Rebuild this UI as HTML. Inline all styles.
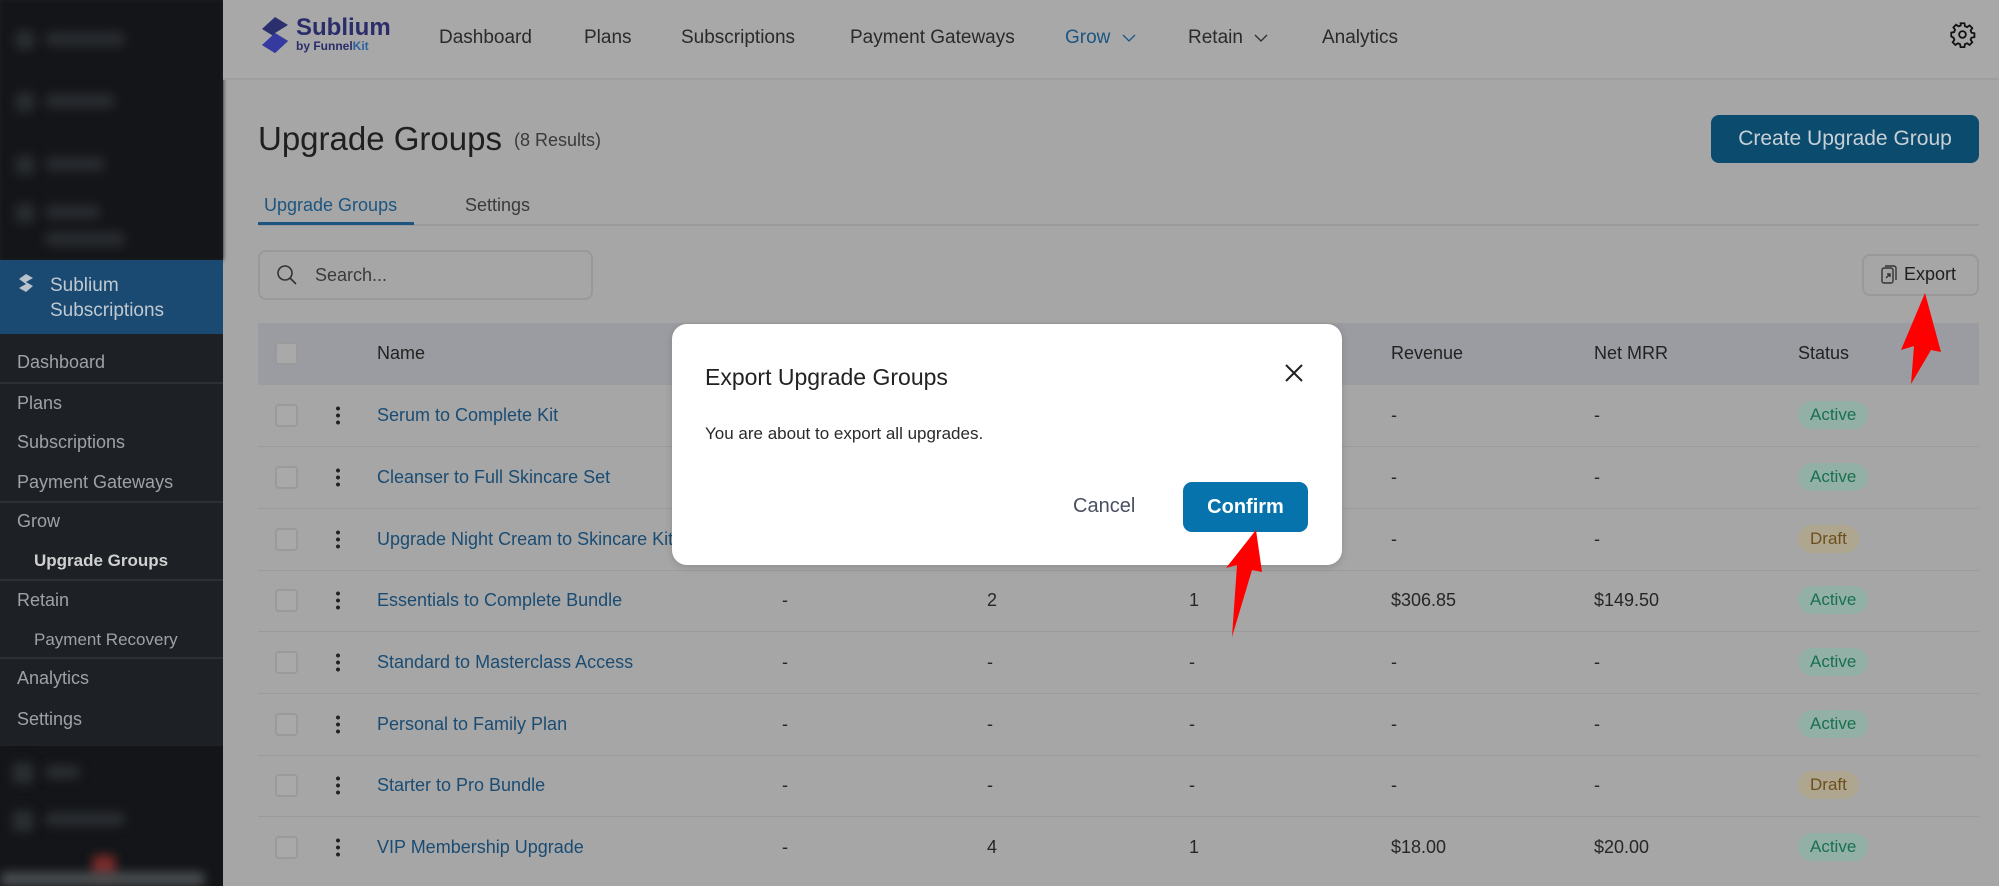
<!DOCTYPE html>
<html><head><meta charset="utf-8"><style>
*{margin:0;padding:0;box-sizing:border-box}
body{width:1999px;height:886px;overflow:hidden;background:#a6a6a6;font-family:"Liberation Sans",sans-serif;position:relative;color:#222}
.a{position:absolute;white-space:nowrap}
#sb{position:absolute;left:0;top:0;width:223px;height:886px;background:#1d2125}
#sbtop{position:absolute;left:0;top:0;width:223px;height:260px;background:#131518;filter:blur(2px)}
.bl{position:absolute;height:14px;background:#2a2d31;border-radius:6px;filter:blur(5px)}
.si{position:absolute;left:17px;font-size:18px;color:#9ea2a6}
.sep{position:absolute;left:0;width:223px;height:2px;background:#2c3034}
#hdr{position:absolute;left:223px;top:0;width:1776px;height:80px;background:#a8a8a8;border-bottom:2px solid #9e9e9e}
.nv{position:absolute;top:27px;font-size:19px;color:#2a2a2a}
.row{position:absolute;left:258px;width:1721px;height:62px;border-bottom:1px solid #9b9b9b}
.cb{position:absolute;left:17px;top:19px;width:23px;height:23px;border:2px solid #9a9a9a;border-radius:4px;background:#a9a9a9}
.kb{position:absolute;left:78px;top:20px;width:4px;height:20px;background:radial-gradient(circle,#222 1.8px,transparent 2.2px) 0 0/4px 7px repeat-y}
.nm{position:absolute;left:119px;top:20px;font-size:18px;color:#1a4c73}
.c{position:absolute;top:20px;font-size:18px;color:#262626}
.bd{position:absolute;left:1540px;top:16px;height:28px;padding:0 12px;border-radius:14px;font-size:17px;line-height:28px}
.ac{background:#93b0a7;color:#18704f}
.dr{background:#aea68f;color:#6e4f1c}
</style></head><body>
<div id="sb">
<div id="sbtop">
<div class="bl" style="left:15px;top:30px;width:20px;height:20px"></div><div class="bl" style="left:45px;top:32px;width:80px"></div>
<div class="bl" style="left:15px;top:92px;width:20px;height:20px"></div><div class="bl" style="left:45px;top:94px;width:70px"></div>
<div class="bl" style="left:15px;top:155px;width:20px;height:20px"></div><div class="bl" style="left:45px;top:157px;width:60px"></div>
<div class="bl" style="left:15px;top:203px;width:20px;height:20px"></div><div class="bl" style="left:45px;top:205px;width:55px"></div><div class="bl" style="left:45px;top:232px;width:80px"></div>
</div>
<div style="position:absolute;left:0;top:260px;width:223px;height:74px;background:#1a4a72"></div>
<svg class="a" style="left:15px;top:272px" width="22" height="22" viewBox="0 0 22 22"><path d="M4 7 L11 2 L18 6 L11 10 L18 14 L11 20 L4 16 L11 12 Z" fill="#b8c2cc"/></svg>
<div class="a" style="left:50px;top:273px;font-size:19px;color:#c0c8d0;line-height:25px">Sublium<br>Subscriptions</div>
<div class="si" style="top:352px">Dashboard</div>
<div class="sep" style="top:382px"></div>
<div class="si" style="top:393px">Plans</div>
<div class="si" style="top:432px">Subscriptions</div>
<div class="si" style="top:472px">Payment Gateways</div>
<div class="sep" style="top:501px"></div>
<div class="si" style="top:511px">Grow</div>
<div class="si" style="top:551px;left:34px;font-size:17px;font-weight:bold;color:#d0d0d0">Upgrade Groups</div>
<div class="sep" style="top:579px"></div>
<div class="si" style="top:590px">Retain</div>
<div class="si" style="top:630px;left:34px;font-size:17px">Payment Recovery</div>
<div class="sep" style="top:657px"></div>
<div class="si" style="top:668px">Analytics</div>
<div class="si" style="top:709px">Settings</div>
<div style="position:absolute;left:0;top:746px;width:223px;height:140px;background:#131518"></div>
<div class="bl" style="left:12px;top:762px;width:22px;height:22px"></div><div class="bl" style="left:45px;top:765px;width:35px"></div>
<div class="bl" style="left:12px;top:810px;width:22px;height:22px"></div><div class="bl" style="left:45px;top:812px;width:80px"></div>
<div class="bl" style="left:92px;top:855px;width:24px;height:24px;background:#7a2a2a"></div>
<div class="bl" style="left:0;top:872px;width:205px;height:14px;background:#4a4d50"></div>
</div>
<div id="hdr"></div>
<svg class="a" style="left:259px;top:16px" width="32" height="38" viewBox="0 0 32 38"><path d="M16 1 L29 9 L16 17 L29 25 L16 37 L3 29 L16 21 L3 13 Z" fill="#2b2f6e"/><path d="M16 17 L29 25 L16 37 L3 29 Z" fill="#343aa0"/></svg>
<div class="a" style="left:296px;top:14px;font-size:24px;font-weight:bold;color:#2a2d6a">Sublium</div>
<div class="a" style="left:296px;top:39px;font-size:12px;font-weight:bold;color:#2a2d6a">by Funnel<span style="color:#2d62a0">Kit</span></div>
<div class="nv" style="left:439px">Dashboard</div>
<div class="nv" style="left:584px">Plans</div>
<div class="nv" style="left:681px">Subscriptions</div>
<div class="nv" style="left:850px">Payment Gateways</div>
<div class="nv" style="left:1065px;color:#1c5580">Grow</div>
<svg class="a" style="left:1122px;top:34px" width="14" height="9" viewBox="0 0 14 9" fill="none" stroke="#1c5580" stroke-width="1.3"><path d="M1 1 L7 7 L13 1"/></svg>
<div class="nv" style="left:1188px">Retain</div>
<svg class="a" style="left:1254px;top:34px" width="14" height="9" viewBox="0 0 14 9" fill="none" stroke="#2a2a2a" stroke-width="1.3"><path d="M1 1 L7 7 L13 1"/></svg>
<div class="nv" style="left:1322px">Analytics</div>
<svg class="a" style="left:1949px;top:21px" width="27" height="27" viewBox="0 0 24 24" fill="none" stroke="#111" stroke-width="1.6"><circle cx="12" cy="12" r="3"/><path d="M10.3 2h3.4l.5 2.6 1.9.8 2.2-1.5 2.4 2.4-1.5 2.2.8 1.9 2.6.5v3.4l-2.6.5-.8 1.9 1.5 2.2-2.4 2.4-2.2-1.5-1.9.8-.5 2.6h-3.4l-.5-2.6-1.9-.8-2.2 1.5-2.4-2.4 1.5-2.2-.8-1.9L2 13.7v-3.4l2.6-.5.8-1.9-1.5-2.2 2.4-2.4 2.2 1.5 1.9-.8z"/></svg>

<div class="a" style="left:258px;top:120px;font-size:33px;color:#1f1f1f">Upgrade Groups</div>
<div class="a" style="left:514px;top:130px;font-size:18px;color:#3a3a3a">(8 Results)</div>
<div class="a" style="left:1711px;top:115px;width:268px;height:48px;background:#0a4b6e;border-radius:8px;color:#c8d0d6;font-size:21px;line-height:48px;text-align:center">Create Upgrade Group</div>
<div class="a" style="left:264px;top:195px;font-size:18px;color:#1c5580">Upgrade Groups</div>
<div class="a" style="left:465px;top:195px;font-size:18px;color:#3a3a3a">Settings</div>
<div class="a" style="left:258px;top:224px;width:1721px;height:2px;background:#9a9a9c"></div>
<div class="a" style="left:258px;top:222px;width:156px;height:3px;background:#1c5580"></div>
<div class="a" style="left:258px;top:250px;width:335px;height:50px;border:2px solid #999;border-radius:8px"></div>
<svg class="a" style="left:276px;top:264px" width="22" height="22" viewBox="0 0 22 22" fill="none" stroke="#333" stroke-width="1.6"><circle cx="9" cy="9" r="7"/><path d="M14 14 L20 20"/></svg>
<div class="a" style="left:315px;top:265px;font-size:18px;color:#3a3a3a">Search...</div>
<div class="a" style="left:1862px;top:254px;width:117px;height:42px;border:2px solid #999;border-radius:8px"></div>
<svg class="a" style="left:1880px;top:265px" width="18" height="20" viewBox="0 0 18 20" fill="none" stroke="#333" stroke-width="1.4"><rect x="2" y="3" width="11" height="15" rx="2"/><path d="M5 1 H14 a2 2 0 0 1 2 2 V15"/><path d="M6 13 L10 9 M7 9 H10 V12"/></svg>
<div class="a" style="left:1904px;top:264px;font-size:18px;color:#1f1f1f">Export</div>

<div class="a" style="left:258px;top:323px;width:1721px;height:62px;background:#9b9ca1"></div>
<div class="cb a" style="left:275px;top:342px"></div>
<div class="a" style="left:377px;top:343px;font-size:18px;color:#222">Name</div>
<div class="a" style="left:1391px;top:343px;font-size:18px;color:#222">Revenue</div>
<div class="a" style="left:1594px;top:343px;font-size:18px;color:#222">Net MRR</div>
<div class="a" style="left:1798px;top:343px;font-size:18px;color:#222">Status</div>

<div class="row" style="top:385px"><div class="cb"></div><div class="kb"></div><div class="nm">Serum to Complete Kit</div><div class="c" style="left:1133px">-</div><div class="c" style="left:1336px">-</div><div class="bd ac">Active</div></div>
<div class="row" style="top:447px"><div class="cb"></div><div class="kb"></div><div class="nm">Cleanser to Full Skincare Set</div><div class="c" style="left:1133px">-</div><div class="c" style="left:1336px">-</div><div class="bd ac">Active</div></div>
<div class="row" style="top:509px"><div class="cb"></div><div class="kb"></div><div class="nm">Upgrade Night Cream to Skincare Kit</div><div class="c" style="left:1133px">-</div><div class="c" style="left:1336px">-</div><div class="bd dr">Draft</div></div>
<div class="row" style="top:570px"><div class="cb"></div><div class="kb"></div><div class="nm">Essentials to Complete Bundle</div><div class="c" style="left:524px">-</div><div class="c" style="left:729px">2</div><div class="c" style="left:931px">1</div><div class="c" style="left:1133px">$306.85</div><div class="c" style="left:1336px">$149.50</div><div class="bd ac">Active</div></div>
<div class="row" style="top:632px"><div class="cb"></div><div class="kb"></div><div class="nm">Standard to Masterclass Access</div><div class="c" style="left:524px">-</div><div class="c" style="left:729px">-</div><div class="c" style="left:931px">-</div><div class="c" style="left:1133px">-</div><div class="c" style="left:1336px">-</div><div class="bd ac">Active</div></div>
<div class="row" style="top:694px"><div class="cb"></div><div class="kb"></div><div class="nm">Personal to Family Plan</div><div class="c" style="left:524px">-</div><div class="c" style="left:729px">-</div><div class="c" style="left:931px">-</div><div class="c" style="left:1133px">-</div><div class="c" style="left:1336px">-</div><div class="bd ac">Active</div></div>
<div class="row" style="top:755px"><div class="cb"></div><div class="kb"></div><div class="nm">Starter to Pro Bundle</div><div class="c" style="left:524px">-</div><div class="c" style="left:729px">-</div><div class="c" style="left:931px">-</div><div class="c" style="left:1133px">-</div><div class="c" style="left:1336px">-</div><div class="bd dr">Draft</div></div>
<div class="row" style="top:817px;border:none"><div class="cb"></div><div class="kb"></div><div class="nm">VIP Membership Upgrade</div><div class="c" style="left:524px">-</div><div class="c" style="left:729px">4</div><div class="c" style="left:931px">1</div><div class="c" style="left:1133px">$18.00</div><div class="c" style="left:1336px">$20.00</div><div class="bd ac">Active</div></div>

<div class="a" style="left:672px;top:324px;width:670px;height:241px;background:#fff;border-radius:15px;box-shadow:0 2px 8px rgba(0,0,0,.15)"></div>
<div class="a" style="left:705px;top:364px;font-size:23px;color:#222">Export Upgrade Groups</div>
<svg class="a" style="left:1284px;top:363px" width="20" height="20" viewBox="0 0 20 20" stroke="#222" stroke-width="2"><path d="M2 2 L18 18 M18 2 L2 18"/></svg>
<div class="a" style="left:705px;top:424px;font-size:17px;color:#2a2a2a">You are about to export all upgrades.</div>
<div class="a" style="left:1073px;top:495px;font-size:20px;color:#4a4f60">Cancel</div>
<div class="a" style="left:1183px;top:482px;width:125px;height:50px;background:#0673ad;border-radius:9px;color:#fff;font-size:20px;font-weight:bold;line-height:50px;text-align:center">Confirm</div>

<svg class="a" style="left:0;top:0" width="1999" height="886"><path d="M1925 293 L1941 352 L1931 350 L1911 384 L1914 346 L1901 350 Z" fill="#ff0000"/><path d="M1256 530 L1262 572 L1252 570 L1232 637 L1237 565 L1226 568 Z" fill="#ff0000"/></svg>
</body></html>
